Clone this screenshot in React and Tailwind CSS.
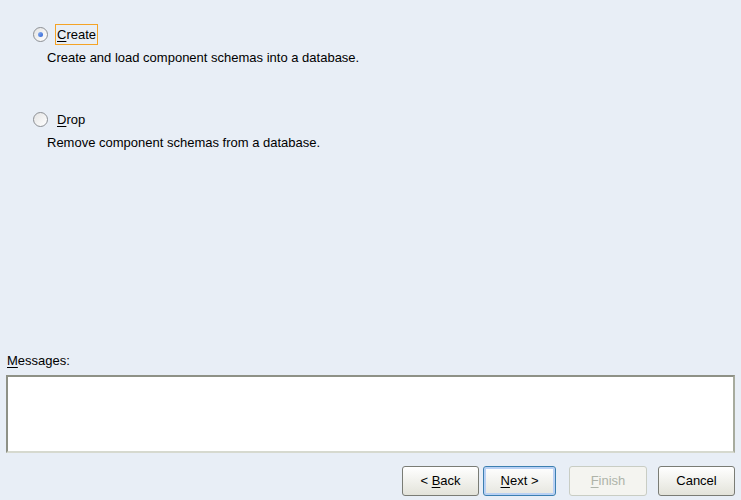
import React from "react";

function Radio({ checked }) {
  return (
    <span className="relative inline-block w-[15px] h-[15px] rounded-full border border-[#8c8f94] bg-gradient-to-br from-[#e4e4e4] to-white shrink-0">
      {checked && (
        <span className="absolute left-[4px] top-[4px] w-[5px] h-[5px] rounded-full bg-gradient-to-br from-[#8fb2ef] to-[#2c5fd4]" />
      )}
    </span>
  );
}

function Btn({ children, primary, disabled, w }) {
  return (
    <div
      className={
        "h-[30px] flex items-center justify-center rounded-[3px] border text-[13px] " +
        (disabled
          ? "border-[#c9cdc4] bg-[#f4f4f0] text-[#aeb3a9] "
          : primary
          ? "border-[#3c7fb1] shadow-[inset_0_0_0_2px_#b9d1f4] bg-gradient-to-b from-white to-[#e6e6df] text-black "
          : "border-[#7a7c75] bg-gradient-to-b from-white to-[#e3e3da] text-black ") +
        w
      }
    >
      {children}
    </div>
  );
}

export default function App() {
  return (
    <div
      className="w-[741px] h-[500px] bg-[#e8eef6] flex flex-col text-[13px] text-black"
      style={{ fontFamily: '"Liberation Sans", Arial, sans-serif' }}
    >
      <div className="pl-[33px] pt-[24px] flex flex-col">
        <div className="flex items-center h-[21px]">
          <Radio checked />
          <span className="ml-[7px] px-[1px] h-[21px] flex items-center border border-[#f4a326]">
            <span className="underline underline-offset-2">C</span>reate
          </span>
        </div>
        <div className="pl-[14px] mt-[5px] leading-[15px]">
          Create and load component schemas into a database.
        </div>
        <div className="flex items-center h-[21px] mt-[44px]">
          <Radio />
          <span className="ml-[8px] px-[1px] h-[21px] flex items-center">
            <span className="underline underline-offset-2">D</span>rop
          </span>
        </div>
        <div className="pl-[14px] mt-[5px] leading-[15px]">
          Remove component schemas from a database.
        </div>
      </div>
      <div className="flex-1" />
      <div className="px-[6px]">
        <div className="pl-[1px] leading-[15px] mb-[7px]">
          <span className="underline underline-offset-2">M</span>essages:
        </div>
        <div className="h-[78px] bg-white border-2 border-t-[#8e9186] border-l-[#8e9186] border-r-[#a7ab9e] border-b-[#d6d9cf]" />
      </div>
      <div className="flex justify-end items-center px-[6px] pt-[13px] pb-[4px]">
        <Btn w="w-[77px]">
          &lt;&nbsp;<span className="underline underline-offset-2">B</span>ack
        </Btn>
        <div className="w-[4px]" />
        <Btn primary w="w-[73px]">
          <span className="underline underline-offset-2">N</span>ext&nbsp;&gt;
        </Btn>
        <div className="w-[13px]" />
        <Btn disabled w="w-[78px]">
          <span className="underline underline-offset-2">F</span>inish
        </Btn>
        <div className="w-[11px]" />
        <Btn w="w-[77px]">Cancel</Btn>
      </div>
    </div>
  );
}
